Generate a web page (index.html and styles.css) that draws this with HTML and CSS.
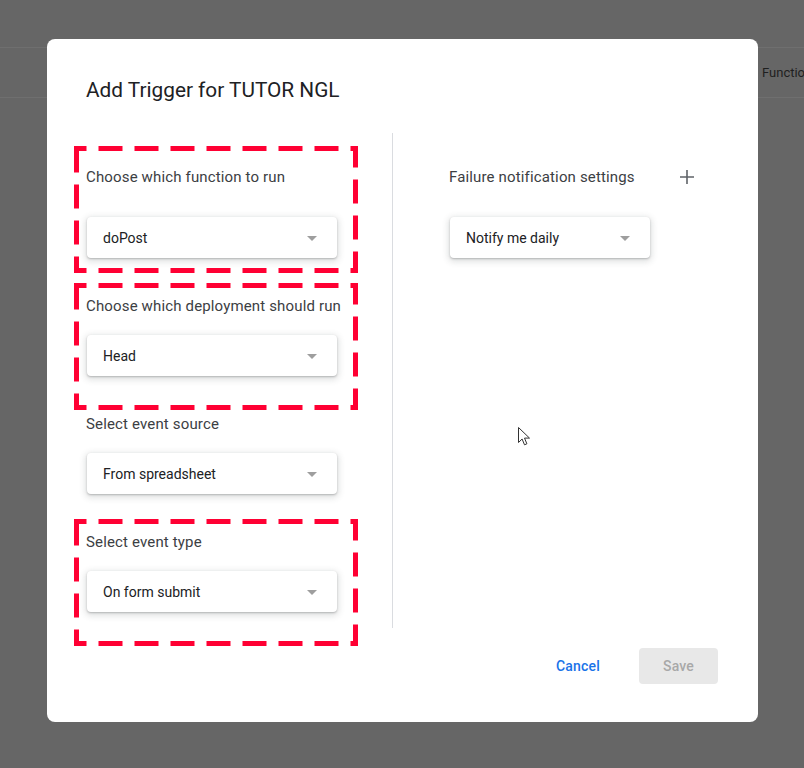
FILE: index.html
```html
<!DOCTYPE html>
<html lang="en">
<head>
<meta charset="utf-8">
<title>Add Trigger for TUTOR NGL</title>
<link rel="stylesheet" href="styles.css">
</head>
<body>
<div class="page">
  <div class="topbar"></div>
  <div class="subbar"><span class="crumb">Functions</span></div>
</div>

<div class="dialog">
  <h1 class="title">Add Trigger for TUTOR NGL</h1>
  <div class="body">
    <div class="col-left">
      <div class="field field-first">
        <svg class="mark mark-first"><rect class="mark-rect"/></svg>
        <div class="row-head"><span class="label">Choose which function to run</span></div>
        <div class="select select-first"><span>doPost</span><i class="caret"></i></div>
      </div>
      <div class="field">
        <svg class="mark"><rect class="mark-rect"/></svg>
        <div class="label">Choose which deployment should run</div>
        <div class="select"><span>Head</span><i class="caret"></i></div>
      </div>
      <div class="field">
        <div class="label">Select event source</div>
        <div class="select"><span>From spreadsheet</span><i class="caret"></i></div>
      </div>
      <div class="field">
        <svg class="mark"><rect class="mark-rect"/></svg>
        <div class="label">Select event type</div>
        <div class="select"><span>On form submit</span><i class="caret"></i></div>
      </div>
    </div>
    <div class="col-right">
      <div class="row-head row-right">
        <span class="label">Failure notification settings</span>
        <span class="add" aria-label="Add">
          <svg viewBox="0 0 24 24" width="24" height="24"><path d="M19 12.8h-6.2V19h-1.6v-6.2H5v-1.6h6.2V5h1.6v6.2H19z" fill="#5f6368"/></svg>
        </span>
      </div>
      <div class="select select-first select-narrow"><span>Notify me daily</span><i class="caret"></i></div>
    </div>
  </div>
  <div class="actions">
    <button class="btn btn-text">Cancel</button>
    <button class="btn btn-save" disabled>Save</button>
  </div>
</div>

<svg class="cursor" viewBox="0 0 13 19" width="13" height="19"><path d="M0.5 0.5v15l3.6-3.5 2.4 5.8 2.4-1-2.4-5.7h5z" fill="#fff" stroke="#333" stroke-width="1"/></svg>
</body>
</html>
```
FILE: styles.css
```css
html, body {
  margin: 0;
  padding: 0;
}
body {
  width: 804px;
  height: 768px;
  overflow: hidden;
  background: #666666;
  font-family: Roboto, "Liberation Sans", Arial, sans-serif;
  position: relative;
}
.page {
  display: flex;
  flex-direction: column;
}
.topbar {
  height: 47px;
  border-bottom: 1px solid #6f6f6f;
}
.subbar {
  height: 49px;
  border-bottom: 1px solid #6f6f6f;
  display: flex;
  align-items: center;
  padding-left: 762px;
  white-space: nowrap;
  overflow: hidden;
}
.crumb {
  font-size: 13px;
  color: #1f1f1f;
}

.dialog {
  position: absolute;
  left: 47px;
  top: 39px;
  width: 711px;
  height: 683px;
  box-sizing: border-box;
  background: #fff;
  border-radius: 8px;
  padding: 39px 40px 38px 39px;
  display: flex;
  flex-direction: column;
}
.title {
  margin: 0;
  font-size: 20.8px;
  line-height: 24px;
  font-weight: 400;
  color: #202124;
  letter-spacing: 0;
}
.body {
  margin-top: 31px;
  display: flex;
  height: 495px;
}
.col-left {
  width: 307px;
  flex: none;
  box-sizing: border-box;
  padding-top: 20px;
  border-right: 1px solid #dadce0;
}
.col-right {
  padding-top: 20px;
  padding-left: 56px;
}
.field {
  position: relative;
  margin-top: 38px;
}
.field-first {
  margin-top: 0;
}
.row-head {
  height: 48px;
  display: flex;
  align-items: center;
}
.row-right {
  width: 250px;
  justify-content: space-between;
}
.label {
  font-size: 15px;
  line-height: 20px;
  color: #3c4043;
  letter-spacing: 0.15px;
  margin-bottom: 19px;
}
.row-head .label {
  margin-bottom: 0;
}
.add {
  width: 24px;
  height: 24px;
  display: flex;
}
.select {
  width: 250px;
  height: 41px;
  margin-left: 1px;
  box-sizing: border-box;
  background: #fff;
  border-radius: 4px;
  box-shadow: 0 1px 2px rgba(60, 64, 67, 0.3), 0 2px 6px 2px rgba(60, 64, 67, 0.15);
  display: flex;
  align-items: center;
  justify-content: space-between;
  padding: 0 20px 0 16px;
  font-size: 14px;
  color: #202124;
}
.select-first {
  margin-top: 16px;
}
.select-narrow {
  width: 200px;
}
.caret {
  width: 0;
  height: 0;
  border-left: 5px solid transparent;
  border-right: 5px solid transparent;
  border-top: 5px solid #9e9e9e;
  margin-top: 2px;
}

.mark {
  position: absolute;
  left: -12px;
  top: -13px;
  width: 284px;
  height: 127px;
  overflow: visible;
  pointer-events: none;
}
.mark-first {
  top: -7px;
}
.mark-rect {
  x: 2.5px;
  y: 2.5px;
  width: calc(100% - 5px);
  height: calc(100% - 5px);
  fill: none;
  stroke: #ff0033;
  stroke-width: 5px;
  stroke-dasharray: 24 12;
  stroke-dashoffset: 14;
}

.actions {
  margin-top: auto;
  display: flex;
  justify-content: flex-end;
  align-items: center;
}
.btn {
  height: 36px;
  border: none;
  border-radius: 4px;
  font-family: Roboto, "Liberation Sans", Arial, sans-serif;
  font-size: 14px;
  font-weight: 500;
  letter-spacing: 0.2px;
  padding: 0 16px;
  background: transparent;
}
.btn-text {
  color: #1a73e8;
  margin-right: 23px;
}
.btn-save {
  width: 79px;
  background: #e8e8e8;
  color: #a8a8a8;
}

.cursor {
  position: absolute;
  left: 518px;
  top: 427px;
}
```
